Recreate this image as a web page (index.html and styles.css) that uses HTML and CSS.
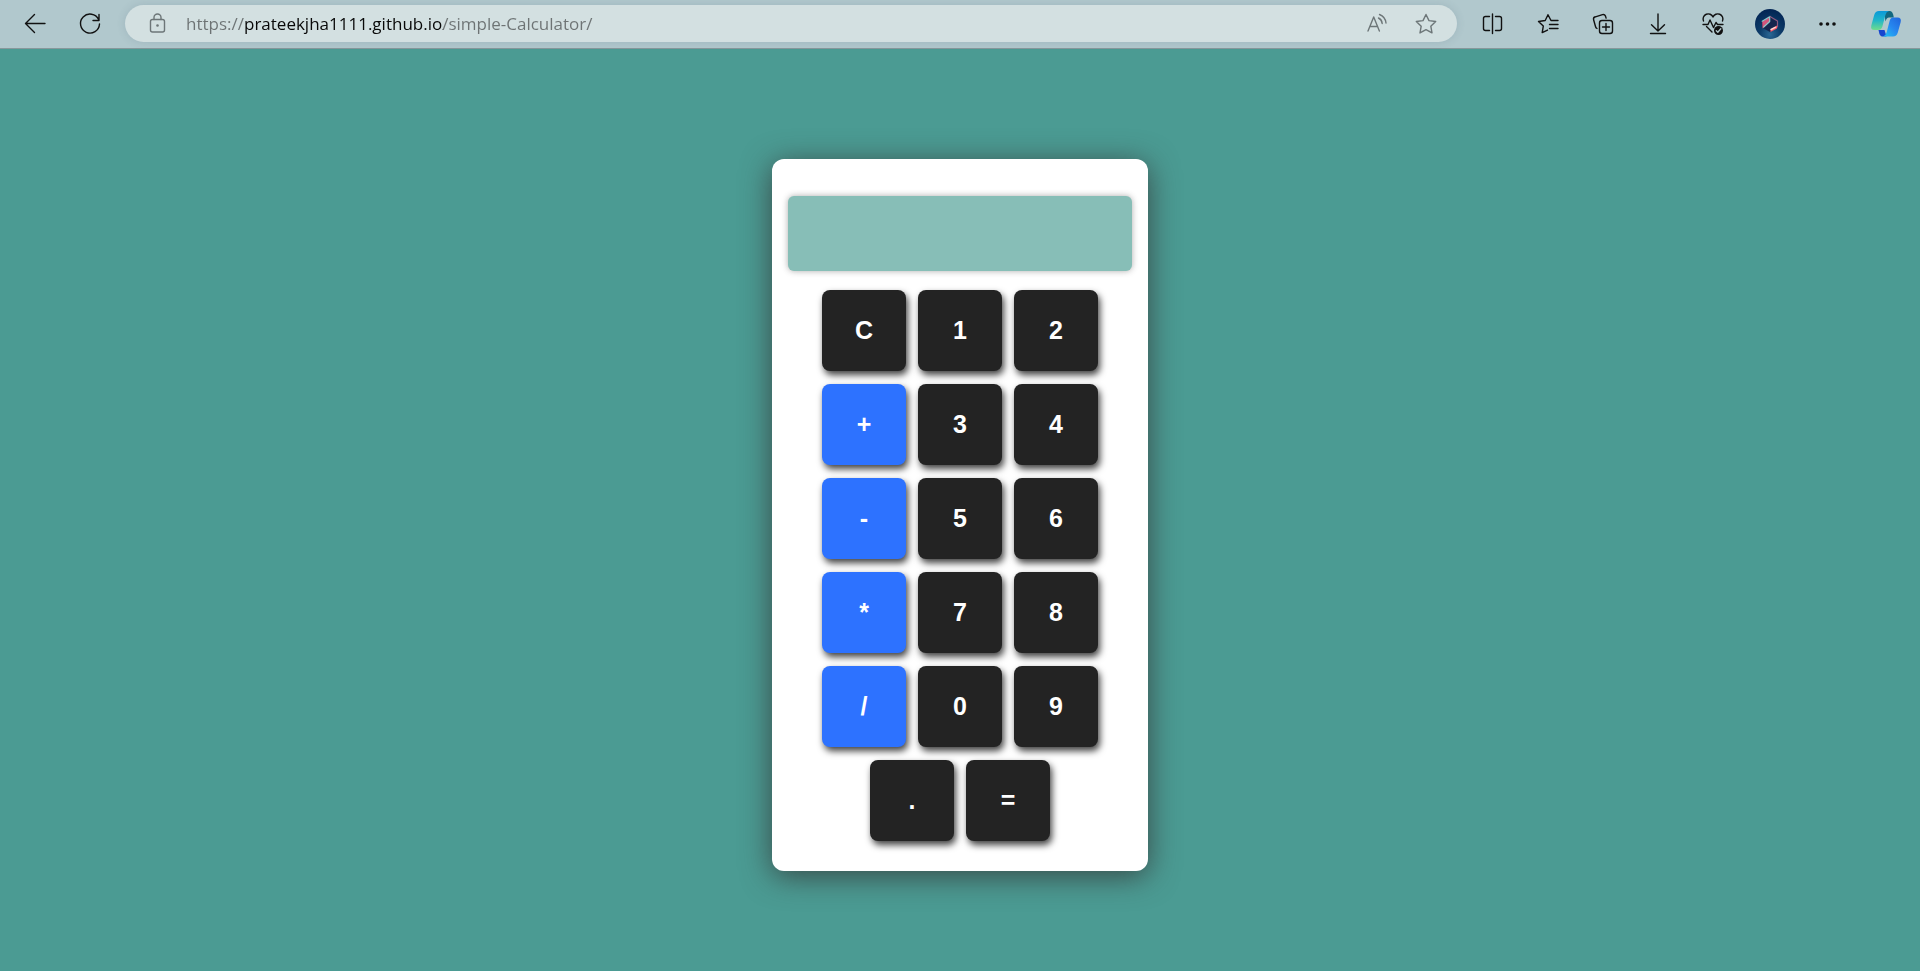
FILE: index.html
```html
<!DOCTYPE html>
<html lang="en">
<head>
<meta charset="utf-8">
<meta name="viewport" content="width=device-width, initial-scale=1">
<title>Simple Calculator</title>
<link rel="stylesheet" href="styles.css">
</head>
<body>
<header class="toolbar">
  <nav class="group" aria-label="Navigation">
    <button class="tool" type="button" aria-label="Back">
      <svg viewBox="0 0 32 32"><path d="M26 15.500H6.500M15.500 6.500L6.500 15.500l9 9"/></svg>
    </button>
    <button class="tool" type="button" aria-label="Refresh">
      <svg viewBox="0 0 32 32"><path d="M24.600 11.500A9.500 9.500 0 1 0 25.500 16M25 6.500v6h-6"/></svg>
    </button>
  </nav>
  <div class="address">
    <button class="tool muted" type="button" aria-label="Site information">
      <svg viewBox="0 0 32 32"><rect x="8.500" y="11.500" width="14" height="12.500" rx="2"/><path d="M12 11.500V9.500a3.500 3.500 0 0 1 7 0v2"/><circle class="solid" cx="15.500" cy="17.500" r="1.300"/></svg>
    </button>
    <input class="url" type="text" aria-label="Address" spellcheck="false" value="https://prateekjha1111.github.io/simple-Calculator/">
    <div class="page-actions">
      <button class="tool muted" type="button" aria-label="Read aloud">
        <svg viewBox="0 0 32 32"><path d="M7 23L12.700 9l5.700 14M9 18.500h7.500M17.500 10q3.300 1.500 3.700 5.500M18.500 6.500q5.800 2.300 6.500 8.500"/></svg>
      </button>
      <button class="tool muted" type="button" aria-label="Add to favorites">
        <svg viewBox="0 0 32 32"><path d="M16 6.500l3 6.100 6.700.9-4.900 4.700 1.200 6.700L16 21.700l-6 3.200 1.200-6.700-4.900-4.700 6.700-.9z"/></svg>
      </button>
    </div>
  </div>
  <div class="group tools">
    <button class="tool" type="button" aria-label="Split screen">
      <svg viewBox="0 0 32 32"><path d="M12.500 8.500h-4a2 2 0 0 0-2 2v10a2 2 0 0 0 2 2h4M18.500 8.500h4a2 2 0 0 1 2 2v10a2 2 0 0 1-2 2h-4M15.500 6v19.500"/></svg>
    </button>
    <button class="tool" type="button" aria-label="Favorites">
      <svg viewBox="0 0 32 32"><path d="M26 12.500h-7l-3-5.800-2.800 5.800-6.700 1 4.800 4.600-1.100 6.500 5.300-2.500M17.500 16.500H26M17.500 20.500H26"/></svg>
    </button>
    <button class="tool" type="button" aria-label="Collections">
      <svg viewBox="0 0 32 32"><rect x="12.500" y="12.500" width="13" height="13" rx="2.500"/><path d="M19 15.500v7M15.500 19h7M10 20.500a3 3 0 0 1-1.500-2L6.600 11.800a2.500 2.500 0 0 1 1.800-3L15.500 6.600a2.600 2.600 0 0 1 3 1.500l.6 2"/></svg>
    </button>
    <button class="tool" type="button" aria-label="Downloads">
      <svg viewBox="0 0 32 32"><path d="M16 6v17M9.500 16.800L16 23l6.500-6.200M8.500 25.500h15"/></svg>
    </button>
    <button class="tool" type="button" aria-label="Browser essentials">
      <svg viewBox="0 0 32 32"><path d="M6.500 13a5 5 0 0 1 9.500-4 5 5 0 0 1 9.500 4M6 16.500h5l2-4.500 3.500 7.500 2.500-5 1.500 2h5.500M9.500 18.500L15 24"/><circle class="solid" cx="21.500" cy="22.500" r="4.500"/><path class="check" d="M19.300 22.800l1.500 1.400 3-3.400"/></svg>
    </button>
  </div>
  <div class="group session">
    <button class="tool" type="button" aria-label="Profile">
      <svg class="art" viewBox="0 0 32 32">
        <defs>
          <radialGradient id="sky" cx=".5" cy=".85" r=".8"><stop offset="0" stop-color="#2a6794"/><stop offset=".45" stop-color="#0c3b68"/><stop offset="1" stop-color="#032655"/></radialGradient>
        </defs>
        <circle cx="16" cy="16" r="15" fill="url(#sky)"/>
        <path d="M16 8.500l7.500 4.500v6.500L16 24l-8-4.500V13z" fill="#15264d"/>
        <path d="M15.500 9l.5 4.500-7.500 7-.3-7z" fill="#d4557c"/>
        <path d="M16 8.500l-7.800 4.700M15.700 9v4.500l-6 5.500" stroke="#8fc8cb" stroke-width="1.200" fill="none"/>
        <path d="M16 8.500l7.500 4.500v6" stroke="#8e5a80" stroke-width="1.200" fill="none"/>
        <path d="M16.500 22l6.500-4.500v3l-6.500 3.500z" fill="#ff5968"/>
        <path d="M17 21.500l4.500-2.300" stroke="#ffd5cf" stroke-width="1.500"/>
      </svg>
    </button>
    <button class="tool" type="button" aria-label="Settings and more">
      <svg viewBox="0 0 32 32"><g class="solid"><circle cx="9" cy="16" r="1.800"/><circle cx="15.500" cy="16" r="1.800"/><circle cx="22" cy="16" r="1.800"/></g></svg>
    </button>
    <button class="tool" type="button" aria-label="Copilot">
      <svg class="art" viewBox="0 0 32 32">
        <defs>
          <linearGradient id="leaf" x1="0" y1="0" x2="0" y2="1"><stop offset="0" stop-color="#0a99d8"/><stop offset=".5" stop-color="#22b6c8"/><stop offset="1" stop-color="#70dc8c"/></linearGradient>
          <linearGradient id="wave" x1="1" y1="0" x2="0" y2="1"><stop offset="0" stop-color="#1f63dc"/><stop offset=".5" stop-color="#2787ef"/><stop offset="1" stop-color="#22c4f3"/></linearGradient>
        </defs>
        <path d="M14 3h6q3 .3 3.800 6.500H19q-2.500 0-3.500 4z" fill="#126880"/>
        <path d="M8.500 22h6l2 6.500H13q-2.800 0-3.600-2.800z" fill="#1746cf"/>
        <path d="M9 3h10q-2.700.6-3.600 4l-3 11.500q-1 3.500-4.400 3.500H4.500Q.3 22 1.300 17.500L4.200 7Q5.300 3 9 3z" fill="url(#leaf)"/>
        <path d="M23 9.500h4.500q4.200 0 3.200 4.500l-2.900 10.500q-1.100 4-4.800 4H13q2.700-.6 3.600-4l3-11.500q.8-3.500 3.400-3.500z" fill="url(#wave)"/>
      </svg>
    </button>
  </div>
</header>
<main class="stage">
  <section class="calculator" aria-label="Calculator">
    <input class="display" type="text" aria-label="Result" readonly>
    <div class="keys">
      <button class="key" type="button">C</button>
      <button class="key" type="button">1</button>
      <button class="key" type="button">2</button>
      <button class="key operator" type="button">+</button>
      <button class="key" type="button">3</button>
      <button class="key" type="button">4</button>
      <button class="key operator" type="button">-</button>
      <button class="key" type="button">5</button>
      <button class="key" type="button">6</button>
      <button class="key operator" type="button">*</button>
      <button class="key" type="button">7</button>
      <button class="key" type="button">8</button>
      <button class="key operator" type="button">/</button>
      <button class="key" type="button">0</button>
      <button class="key" type="button">9</button>
      <button class="key" type="button">.</button>
      <button class="key" type="button">=</button>
    </div>
  </section>
</main>
</body>
</html>
```
FILE: styles.css
```css
* {
  box-sizing: border-box;
}

body {
  margin: 0;
  min-height: 100vh;
  display: flex;
  flex-direction: column;
  background: #4b9b93;
  font-family: "Liberation Sans", Arial, sans-serif;
}

button,
input {
  border: 0;
  padding: 0;
  font: inherit;
}

.toolbar {
  display: flex;
  align-items: center;
  padding: 5px 18px 6px 19px;
  background: #b1c8cd;
  border-bottom: 1px solid #87989b;
}

.group {
  display: flex;
  gap: 23px;
}

.tool {
  width: 32px;
  height: 33px;
  padding-top: 1px;
  flex: none;
  background: none;
  color: #111;
}

.tool svg {
  display: block;
  width: 32px;
  height: 32px;
  fill: none;
  stroke: currentColor;
  stroke-width: 1.4;
  stroke-linecap: round;
  stroke-linejoin: round;
}

.tool .art {
  stroke: none;
}

.tool .solid {
  fill: currentColor;
  stroke: none;
}

.tool .check {
  stroke: #b1c8cd;
}

.muted {
  color: #6d7678;
}

.address {
  flex: 1;
  min-width: 0;
  height: 37px;
  margin: 0 20px 0 19px;
  padding: 0 15px 0 17px;
  display: flex;
  align-items: center;
  background: #d3e0e1;
  border-radius: 19px;
  box-shadow: 0 0 8px rgba(60, 90, 110, 0.16);
}

/* The scheme and path are dimmed; the host is drawn in full black. */
.url {
  flex: 1;
  min-width: 0;
  height: 37px;
  margin-left: 12px;
  font-family: "Segoe UI", "Open Sans", sans-serif;
  font-size: 17px;
  color: transparent;
  caret-color: #111;
  background: linear-gradient(90deg, #6d7374 58px, #080808 58px, #080808 257px, #6d7374 257px);
  background-clip: text;
  -webkit-background-clip: text;
}

.page-actions {
  display: flex;
  gap: 17px;
}

.tools {
  margin-right: 25px;
}

.session {
  gap: 26px;
}

.stage {
  flex: 1;
  display: flex;
  justify-content: center;
  align-items: center;
  padding: 20px 0 10px;
}

.calculator {
  width: 376px;
  max-width: 100%;
  padding: 37px 16px 30px;
  background: #fff;
  border-radius: 12px;
  box-shadow: 0 5px 30px rgba(51, 51, 51, 0.8);
}

.display {
  display: block;
  width: 100%;
  height: 75px;
  padding: 0 16px;
  text-align: right;
  font-size: 32px;
  background: #87beb7;
  border-radius: 6px;
  box-shadow: 0 0 6px rgba(51, 51, 51, 0.4);
}

.keys {
  display: flex;
  flex-wrap: wrap;
  justify-content: center;
  gap: 13px 12px;
  padding: 19px 33px 0;
}

.key {
  width: 84px;
  height: 81px;
  border-radius: 8px;
  background: #232323;
  color: #fff;
  font-size: 25px;
  font-weight: 700;
  box-shadow: 2px 4px 7px rgba(0, 0, 0, 0.75);
}

.operator {
  background: #2d72ff;
}
```
